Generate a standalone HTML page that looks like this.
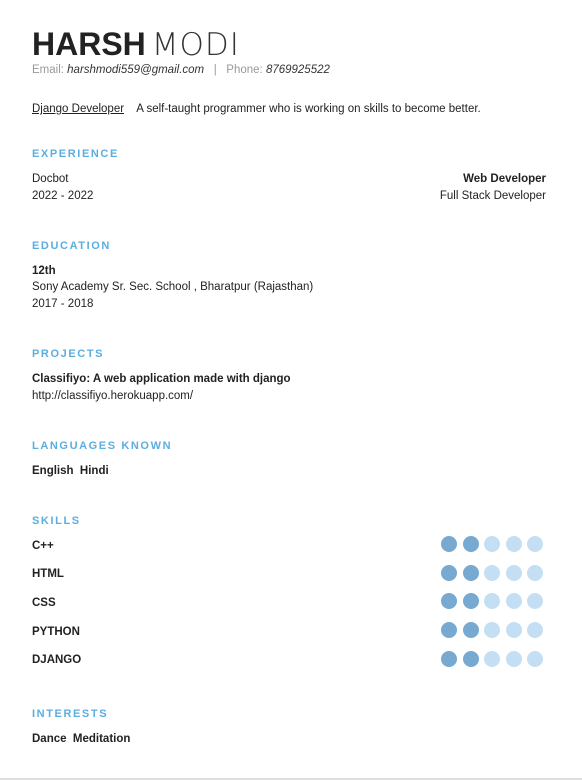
<!DOCTYPE html>
<html><head><meta charset="utf-8"><style>
body{margin:0;width:582px;height:780px;background:#fff;font-family:"Liberation Sans",sans-serif;color:#222;position:relative;overflow:hidden}
.a{position:absolute;white-space:nowrap}
.h{font-size:11px;font-weight:bold;letter-spacing:1.6px;color:#5aaee0}
.t{font-size:11.5px}
.b{font-weight:bold}
.d{position:absolute;width:16px;height:16px;border-radius:50%}
.dk{background:#78a9d1}.lt{background:#c4dff3}
</style></head><body>
<div class="a" style="left:32px;top:25px;font-size:32px;line-height:38px"><b style="color:#222">HARSH</b><span style="color:#333;font-family:'DejaVu Sans',sans-serif;font-size:31px;font-weight:200;margin-left:6px;letter-spacing:1px">MODI</span></div>
<div class="a t" style="left:32px;top:64px;color:#999">Email: <i style="color:#333">harshmodi559@gmail.com</i> &nbsp; | &nbsp; Phone: <i style="color:#333">8769925522</i></div>
<div class="a t" style="left:32px;top:103px"><u>Django Developer</u> &nbsp;&nbsp; A self-taught programmer who is working on skills to become better.</div>

<div class="a h" style="left:32px;top:148px">EXPERIENCE</div>
<div class="a t" style="left:32px;top:173px">Docbot</div>
<div class="a t" style="left:32px;top:190px">2022 - 2022</div>
<div class="a t b" style="right:36px;top:173px">Web Developer</div>
<div class="a t" style="right:36px;top:190px">Full Stack Developer</div>

<div class="a h" style="left:32px;top:240px">EDUCATION</div>
<div class="a t b" style="left:32px;top:265px">12th</div>
<div class="a t" style="left:32px;top:281px">Sony Academy Sr. Sec. School , Bharatpur (Rajasthan)</div>
<div class="a t" style="left:32px;top:298px">2017 - 2018</div>

<div class="a h" style="left:32px;top:348px">PROJECTS</div>
<div class="a t b" style="left:32px;top:373px">Classifiyo: A web application made with django</div>
<div class="a t" style="left:32px;top:390px">http://classifiyo.herokuapp.com/</div>

<div class="a h" style="left:32px;top:440px">LANGUAGES KNOWN</div>
<div class="a t b" style="left:32px;top:465px">English &nbsp;Hindi</div>

<div class="a h" style="left:32px;top:515px">SKILLS</div>
<div class="a t b" style="left:32px;top:540px">C++</div>
<div class="a t b" style="left:32px;top:568px">HTML</div>
<div class="a t b" style="left:32px;top:597px">CSS</div>
<div class="a t b" style="left:32px;top:626px">PYTHON</div>
<div class="a t b" style="left:32px;top:654px">DJANGO</div>
<div id="dots"></div>

<div class="a h" style="left:32px;top:708px">INTERESTS</div>
<div class="a t b" style="left:32px;top:733px">Dance &nbsp;Meditation</div>
<div style="position:absolute;left:0;top:778px;width:582px;height:2px;background:#ddd"></div>
<script>
var ys=[536,564.5,593,622,650.5],xs=[441,462.5,484,505.5,527],h='';
ys.forEach(function(y){xs.forEach(function(x,i){h+='<div class="d '+(i<2?'dk':'lt')+'" style="left:'+x+'px;top:'+y+'px"></div>';});});
document.getElementById('dots').innerHTML=h;
</script>
</body></html>
